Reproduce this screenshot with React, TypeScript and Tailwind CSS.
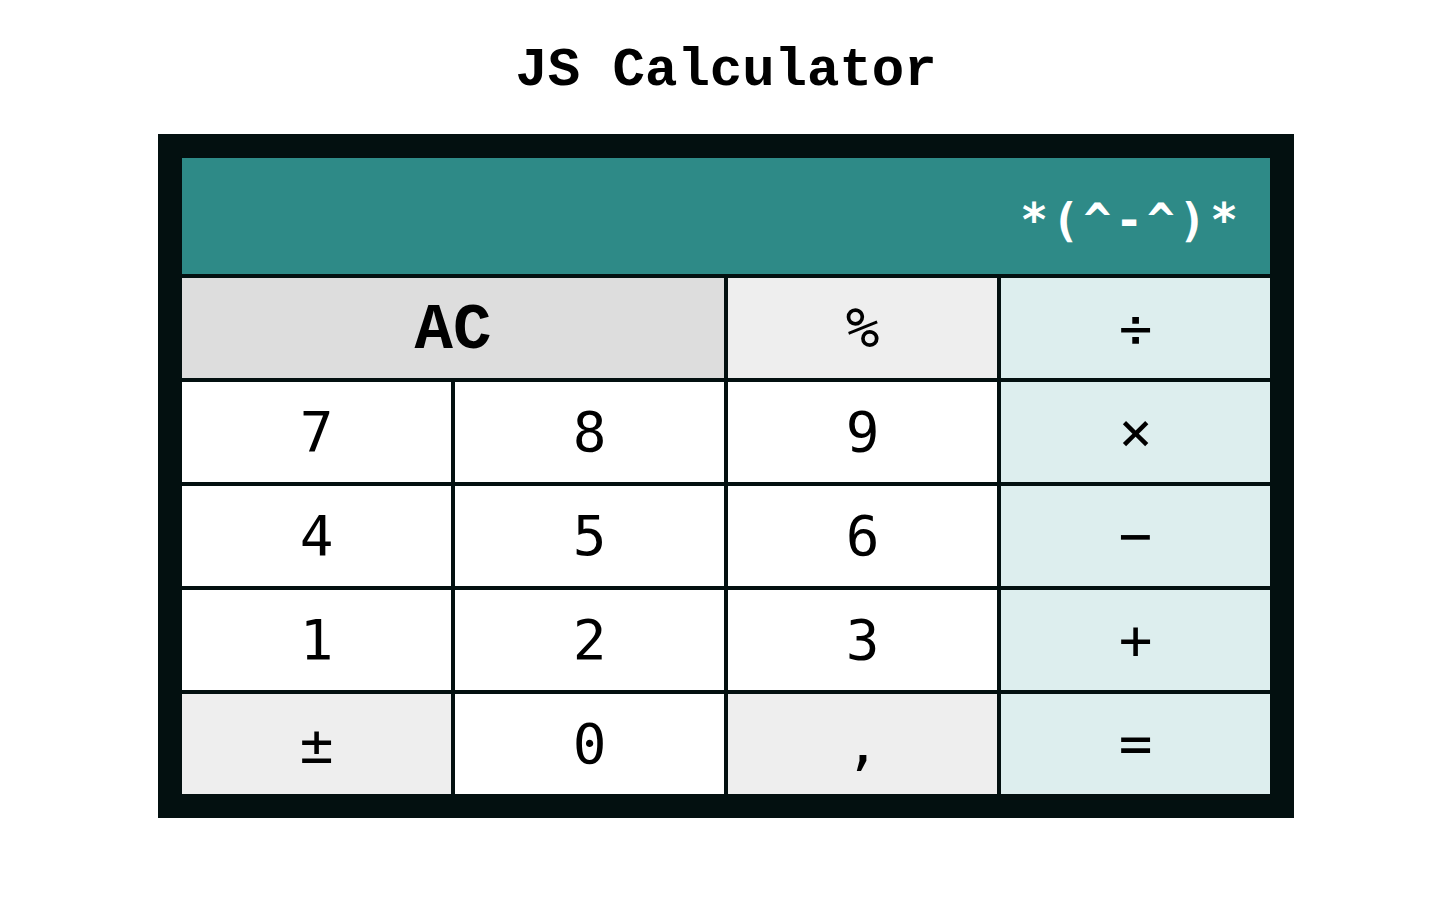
import { useState } from "react";

type Key = { label: string; bg: string; span?: boolean; serif?: boolean };

const KEYS: Key[] = [
  { label: "AC", bg: "bg-[#dddddd]", span: true, serif: true },
  { label: "%", bg: "bg-[#eeeeee]" },
  { label: "÷", bg: "bg-[#ddeeee]" },
  { label: "7", bg: "bg-white" },
  { label: "8", bg: "bg-white" },
  { label: "9", bg: "bg-white" },
  { label: "×", bg: "bg-[#ddeeee]" },
  { label: "4", bg: "bg-white" },
  { label: "5", bg: "bg-white" },
  { label: "6", bg: "bg-white" },
  { label: "−", bg: "bg-[#ddeeee]" },
  { label: "1", bg: "bg-white" },
  { label: "2", bg: "bg-white" },
  { label: "3", bg: "bg-white" },
  { label: "+", bg: "bg-[#ddeeee]" },
  { label: "±", bg: "bg-[#eeeeee]" },
  { label: "0", bg: "bg-white" },
  { label: ",", bg: "bg-[#eeeeee]" },
  { label: "=", bg: "bg-[#ddeeee]" },
];

export default function App() {
  const [display] = useState("*(^-^)*");

  return (
    <div className="min-h-screen bg-white flex flex-col items-center">
      {/* titre */}
      <h1 className="pt-[43px] text-[54px] leading-[56px] font-bold text-black font-['Liberation_Mono',monospace]">
        JS Calculator
      </h1>

      <div className="mt-[35px] w-[1136px] bg-[#031010] p-6">
        {/* écran */}
        <div className="h-[116px] bg-[#2e8a87] flex items-center justify-end pr-[28px] pt-[8px]">
          <span className="text-white font-bold text-[46px] tracking-[4px] font-['DejaVu_Sans_Mono',monospace]">
            {display}
          </span>
        </div>

        {/* touches */}
        <div className="mt-1 grid grid-cols-4 auto-rows-[100px] gap-1">
          {KEYS.map((k) => (
            <button
              key={k.label}
              className={`${k.bg} ${k.span ? "col-span-2" : ""} flex items-center justify-center text-black ${
                k.serif
                  ? "font-['Liberation_Mono',monospace] font-bold text-[64px] pt-[6px]"
                  : "font-['DejaVu_Sans_Mono',monospace] text-[56px]"
              }`}
            >
              {k.label}
            </button>
          ))}
        </div>
      </div>
    </div>
  );
}
